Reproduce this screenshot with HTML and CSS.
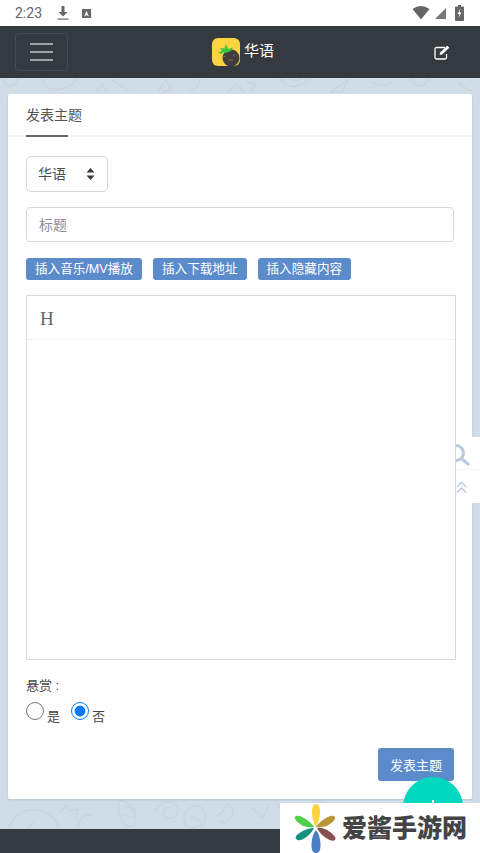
FILE: index.html
```html
<!DOCTYPE html>
<html lang="zh-CN">
<head>
    <meta charset="UTF-8">
    <meta name="viewport" content="width=device-width, initial-scale=1.0">
    <title>发表主题</title>
    <link rel="stylesheet" href="styles.css">
</head>
<body>
    <div class="status-bar">
        <span class="status-time">2:23</span>
        <svg class="status-icon" width="14" height="16" viewBox="0 0 14 16"><path d="M5.500 1h3v6h3L7 11.500 2.500 7h3z" fill="#666"/><rect x="1.500" y="13.500" width="11" height="1.200" fill="#666"/></svg>
        <svg class="status-icon" width="11" height="11" viewBox="0 0 12 12"><rect x="1" y="1" width="10" height="10" rx="1" fill="#666"/><path d="M3.500 9 6 3l2.500 6H7.300L7 8H5l-.3 1z" fill="#fff"/></svg>
        <span class="status-right">
            <svg width="18" height="14" viewBox="0 0 18 14"><path d="M0.500 3Q9-3 17.500 3L9 13.500z" fill="#666"/></svg>
            <svg width="13" height="13" viewBox="0 0 13 13"><path d="M12 1v11H1z" fill="#777"/></svg>
            <svg class="status-battery" width="9" height="16" viewBox="0 0 9 16"><path d="M3 0h3v1.500h2.200q.8 0 .8.800V15q0 1-1 1H1q-1 0-1-1V2.300q0-.8.800-.8H3z" fill="#666"/><path d="M5.500 3.500 2.500 9h2L3.500 13l3-5.500h-2z" fill="#fff"/></svg>
        </span>
    </div>

    <div class="navbar">
        <button class="nav-toggler" aria-label="menu">
            <span></span><span></span><span></span>
        </button>
        <div class="brand">
            <svg class="brand-logo" width="28" height="28" viewBox="0 0 28 28">
                <rect width="28" height="28" rx="6" fill="#fdd33f"/>
                <circle cx="19" cy="20" r="8.500" fill="#403e3c"/>
                <path d="M6 15l4-2.500L8 10l4.500.5L14 6l2 5 5-1.500-2 3.500-5 2-3-.5-2 1.500z" fill="#3fc43f"/>
                <path d="M11 19l3-1M16 22h5M21 17l2 1" stroke="#8a6a3a" stroke-width="1"/>
            </svg>
            <span class="brand-name">华语</span>
        </div>
        <svg class="nav-edit" width="17" height="15" viewBox="0 0 17 15" fill="none" stroke="#fff" stroke-width="1.300">
            <path d="M11 2.500H2.500q-1.500 0-1.500 1.500v8.500q0 1.500 1.500 1.500H11q1.500 0 1.500-1.500V9"/>
            <path d="M5.500 10l.6-2.500L13.300.8l2 2-7.200 6.600z" fill="#fff" stroke="none"/>
        </svg>
    </div>

    <div class="page">
        <div class="card">
            <div class="card-tabs">
                <span class="card-tab">发表主题</span>
            </div>
            <div class="card-body">
                <select class="forum-select">
                    <option>华语</option>
                </select>
                <input class="title-input" type="text" placeholder="标题">
                <div class="insert-buttons">
                    <button class="insert-btn">插入音乐/MV播放</button>
                    <button class="insert-btn">插入下载地址</button>
                    <button class="insert-btn">插入隐藏内容</button>
                </div>
                <div class="editor">
                    <div class="editor-toolbar">H</div>
                    <div class="editor-text"></div>
                </div>
                <div class="reward-label">悬赏&nbsp;:</div>
                <div class="reward-options">
                    <label class="reward-option"><input type="radio" name="reward"><span>是</span></label>
                    <label class="reward-option"><input type="radio" name="reward" checked><span>否</span></label>
                </div>
                <div class="form-actions">
                    <button class="submit-btn">发表主题</button>
                </div>
            </div>
        </div>
    </div>

    <div class="footer"></div>

    <div class="side-tools">
        <div class="side-tool side-search">
            <svg width="14" height="22" viewBox="0 0 14 22" fill="none" stroke="#b9c9de" stroke-width="3"><circle cx="0" cy="9" r="7.500"/><path d="M6 15l6 5" stroke-linecap="round"/></svg>
        </div>
        <div class="side-tool side-top">
            <svg width="11" height="13" viewBox="0 0 12 14" fill="none" stroke="#b9c9de" stroke-width="1.500"><path d="M1 6.500l5-5 5 5M1 12.500l5-5 5 5"/></svg>
        </div>
    </div>

    <div class="fab"><span class="fab-plus"></span></div>

    <div class="watermark">
        <svg width="44" height="49" viewBox="0 0 44 49">
            <path d="M22 0q4 0 4 8t-4 15q-4-7-4-15t4-8z" fill="#fdd33f"/>
            <path d="M1 13q2-3 9 1t10 9q-8 1-14-3t-5-7z" fill="#4fd04a"/>
            <path d="M41 13q-2-3-9 1t-10 9q8 1 14-3t5-7z" fill="#b8963a"/>
            <path d="M2 35q-2-3 5-7t13-4q-3 6-9 10t-9 1z" fill="#14917f"/>
            <path d="M41 36q2-3-5-8t-13-4q3 6 9 10t9 2z" fill="#85504f"/>
            <path d="M22 49q-5 0-4.500-9T22 26q4 5 4.500 14T22 49z" fill="#4a7fc6"/>
        </svg>
        <span class="watermark-text">爱酱手游网</span>
    </div>
</body>
</html>
```
FILE: styles.css
```css
* {
    margin: 0;
    padding: 0;
    box-sizing: border-box;
}

body {
    position: relative;
    display: flex;
    flex-direction: column;
    width: 480px;
    height: 853px;
    overflow: hidden;
    font-family: "Liberation Sans", "Noto Sans CJK SC", sans-serif;
    font-size: 14px;
    color: #495057;
    background-color: #d0dce6;
}

.status-bar {
    display: flex;
    align-items: center;
    flex: 0 0 26px;
    padding: 0 16px 0 15px;
    background-color: #fff;
    color: #666;
    font-family: Roboto, sans-serif;
    font-size: 14px;
}

.status-time {
    margin-right: 14px;
}

.status-icon {
    margin-right: 11px;
}

.status-right {
    display: flex;
    align-items: center;
    gap: 4px;
    margin-left: auto;
}

.status-battery {
    margin-left: 4px;
}

.navbar {
    display: flex;
    align-items: center;
    position: relative;
    flex: 0 0 52px;
    padding: 0 29px 0 15px;
    background-color: #343a40;
}

.nav-toggler {
    display: flex;
    flex-direction: column;
    justify-content: center;
    gap: 6px;
    width: 53px;
    height: 38px;
    padding: 0 14px;
    background: none;
    border: 1px solid #474c53;
    border-radius: 4px;
}

.nav-toggler span {
    display: block;
    height: 2px;
    background-color: #a0a3a6;
}

.brand {
    display: flex;
    align-items: center;
    gap: 4px;
    margin-left: 144px;
}

.brand-name {
    color: #fff;
    font-size: 15px;
    margin-top: -5px;
}

.nav-edit {
    margin-left: auto;
}

.page {
    flex: 1;
    padding: 16px 8px 0;
    background-image: url("data:image/svg+xml,%3Csvg xmlns='http://www.w3.org/2000/svg' width='480' height='751' fill='none' stroke='%23c8d4de' stroke-width='1.300'%3E%3Ccircle cx='10' cy='1' r='7'/%3E%3Cpath d='M42 2q8 14 22 8t12-10M96 14l6-8 5 8M112 2l18 12M158 14l8-12 6 10-10 2M188 14q12-4 12-14M228 14l8-8 8 8M246 4l10 2-6 8M280 0q6 10 16 8t14-8M288 0q8 5 14 0M330 14l18-12-6 12zM372 4q10 6 20 0M412 0a8 8 0 0 0 16 0M458 4q8 8 14 8'/%3E%3Cpath d='M8 752q8-22 28-20t22 18M60 735l6-8 4 6 8-2-2 10M78 750q4-18 14-12M120 722q10 2 14 12t-2 14q-8 2-12-10t0-16M124 728l12 4M122 736l12 4M156 734q2-10 12-10t10 8-8 8-6-6 6-4M186 748q-6-12 4-18t14 4-4 14-14 0M190 738l12 6M216 738q8-2 10-12 10 4 6 12t-12 6M252 730l10 10 8-14M276 722l8 18 8-8M320 722l14 8M340 740l12 10M28 750l6-6'/%3E%3C/svg%3E");
    background-repeat: no-repeat;
}

.card {
    height: 705px;
    background-color: #fff;
    border-radius: 2px;
    box-shadow: 0 1px 2px rgba(0, 0, 0, 0.12);
}

.card-tabs {
    height: 43px;
    padding: 0 18px;
    border-bottom: 2px solid #f2f3f5;
}

.card-tab {
    display: block;
    position: relative;
    height: 43px;
    padding-top: 11px;
    font-size: 14px;
    line-height: 20px;
    color: #555;
}

.card-tab::after {
    content: "";
    position: absolute;
    left: 0;
    bottom: 0;
    width: 42px;
    height: 2px;
    background-color: #666;
}

.card-body {
    padding: 19px 18px 0;
}

.forum-select {
    display: block;
    width: 82px;
    height: 36px;
    padding-left: 11px;
    font-family: inherit;
    font-size: 14px;
    color: #495057;
    appearance: none;
    background: #fff url("data:image/svg+xml,%3Csvg xmlns='http://www.w3.org/2000/svg' width='9' height='12'%3E%3Cpath d='M4.500 0 8.500 4.500H.5zM4.500 12 .5 7.500h8z' fill='%23343a40'/%3E%3C/svg%3E") no-repeat right 12px center;
    border: 1px solid #d2d9e2;
    border-radius: 5px;
}

.title-input {
    display: block;
    width: 428px;
    height: 35px;
    margin-top: 15px;
    padding: 0 12px;
    font-family: inherit;
    font-size: 14px;
    border: 1px solid #d2d9e2;
    border-radius: 4px;
}

.title-input::placeholder {
    color: #8a9096;
}

.insert-buttons {
    display: flex;
    gap: 11px;
    margin-top: 16px;
}

.insert-btn {
    height: 22px;
    padding: 0 9px;
    font-family: inherit;
    font-size: 12.600px;
    line-height: 20px;
    color: #fff;
    background-color: #5b8bcb;
    border: none;
    border-radius: 3px;
}

.editor {
    display: flex;
    flex-direction: column;
    width: 430px;
    height: 365px;
    margin-top: 15px;
    border: 1px solid #d5d9e0;
}

.editor-toolbar {
    flex: 0 0 44px;
    padding: 11px 13px 0;
    font-family: "Liberation Serif", serif;
    font-size: 19px;
    line-height: 24px;
    color: #666;
    border-bottom: 1px solid #f1f2f4;
}

.editor-text {
    flex: 1;
}

.reward-label {
    margin-top: 17px;
    font-size: 13px;
    line-height: 18px;
    color: #444;
}

.reward-options {
    display: flex;
    gap: 11px;
    margin-top: 7px;
}

.reward-option {
    display: flex;
    align-items: flex-start;
    gap: 3px;
    font-size: 13px;
    color: #444;
}

.reward-option input {
    width: 18px;
    height: 18px;
    accent-color: #007bff;
}

.reward-option span {
    margin-top: 4px;
}

.form-actions {
    display: flex;
    justify-content: flex-end;
    margin-top: 23px;
}

.submit-btn {
    width: 76px;
    height: 33px;
    font-family: inherit;
    font-size: 13px;
    color: #fff;
    background-color: #5b8bcb;
    border: none;
    border-radius: 3px;
}

.footer {
    flex: 0 0 24px;
    background-color: #343a40;
}

.side-tools {
    position: absolute;
    top: 437px;
    right: 0;
    width: 24px;
    height: 66px;
    background-color: #fff;
}

.side-tool {
    display: flex;
    height: 33px;
}

.side-search {
    padding-top: 7px;
    border-bottom: 1px solid #f5f6f8;
}

.side-top {
    padding-top: 11px;
}

.fab {
    position: absolute;
    left: 403px;
    top: 777px;
    width: 60px;
    height: 60px;
    background-color: #00d8c0;
    border-radius: 50%;
}

.fab-plus {
    position: absolute;
    left: 29px;
    top: 23px;
    width: 2px;
    height: 16px;
    background-color: #fff;
}

.watermark {
    position: absolute;
    left: 280px;
    top: 803px;
    display: flex;
    align-items: center;
    gap: 4px;
    width: 200px;
    height: 50px;
    padding-left: 14px;
    background-color: #fff;
}

.watermark-text {
    margin-top: -4px;
    font-family: "Noto Sans CJK SC", sans-serif;
    font-size: 25px;
    font-weight: 900;
    color: #444;
}
```
